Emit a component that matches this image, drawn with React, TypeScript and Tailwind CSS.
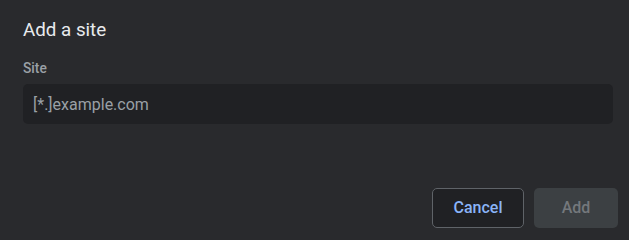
export default function App() {
    return (
        <div className="h-[240px] w-full bg-[#292a2d] flex flex-col pt-[18px] pb-[12px] pl-[23px] font-['Roboto','Liberation_Sans',sans-serif]">
            <div className="text-[18.75px] leading-[24px] text-[#e8eaed]">Add a site</div>

            <div className="pr-[16px]">
                <label className="block mt-[18px] text-[13.75px] leading-[16px] font-medium text-[#9aa0a6]">Site</label>
                <input
                    placeholder="[*.]example.com"
                    className="mt-[8px] w-full h-[40px] rounded-[5px] bg-[#202124] px-[10px] text-[16px] text-[#e8eaed] placeholder:text-[#9aa0a6] outline-none"
                />
            </div>

            <div className="mt-auto flex justify-end gap-[10px] pr-[11px]">
                <button className="h-[40px] w-[92px] rounded-[5px] border border-[#5f6368] bg-[#202124] text-[16px] font-medium text-[#8ab4f8]">
                    Cancel
                </button>
                <button disabled className="h-[40px] w-[84px] rounded-[5px] bg-[#3c4043] text-[16px] font-medium text-[#74787c]">
                    Add
                </button>
            </div>
        </div>
    );
}
